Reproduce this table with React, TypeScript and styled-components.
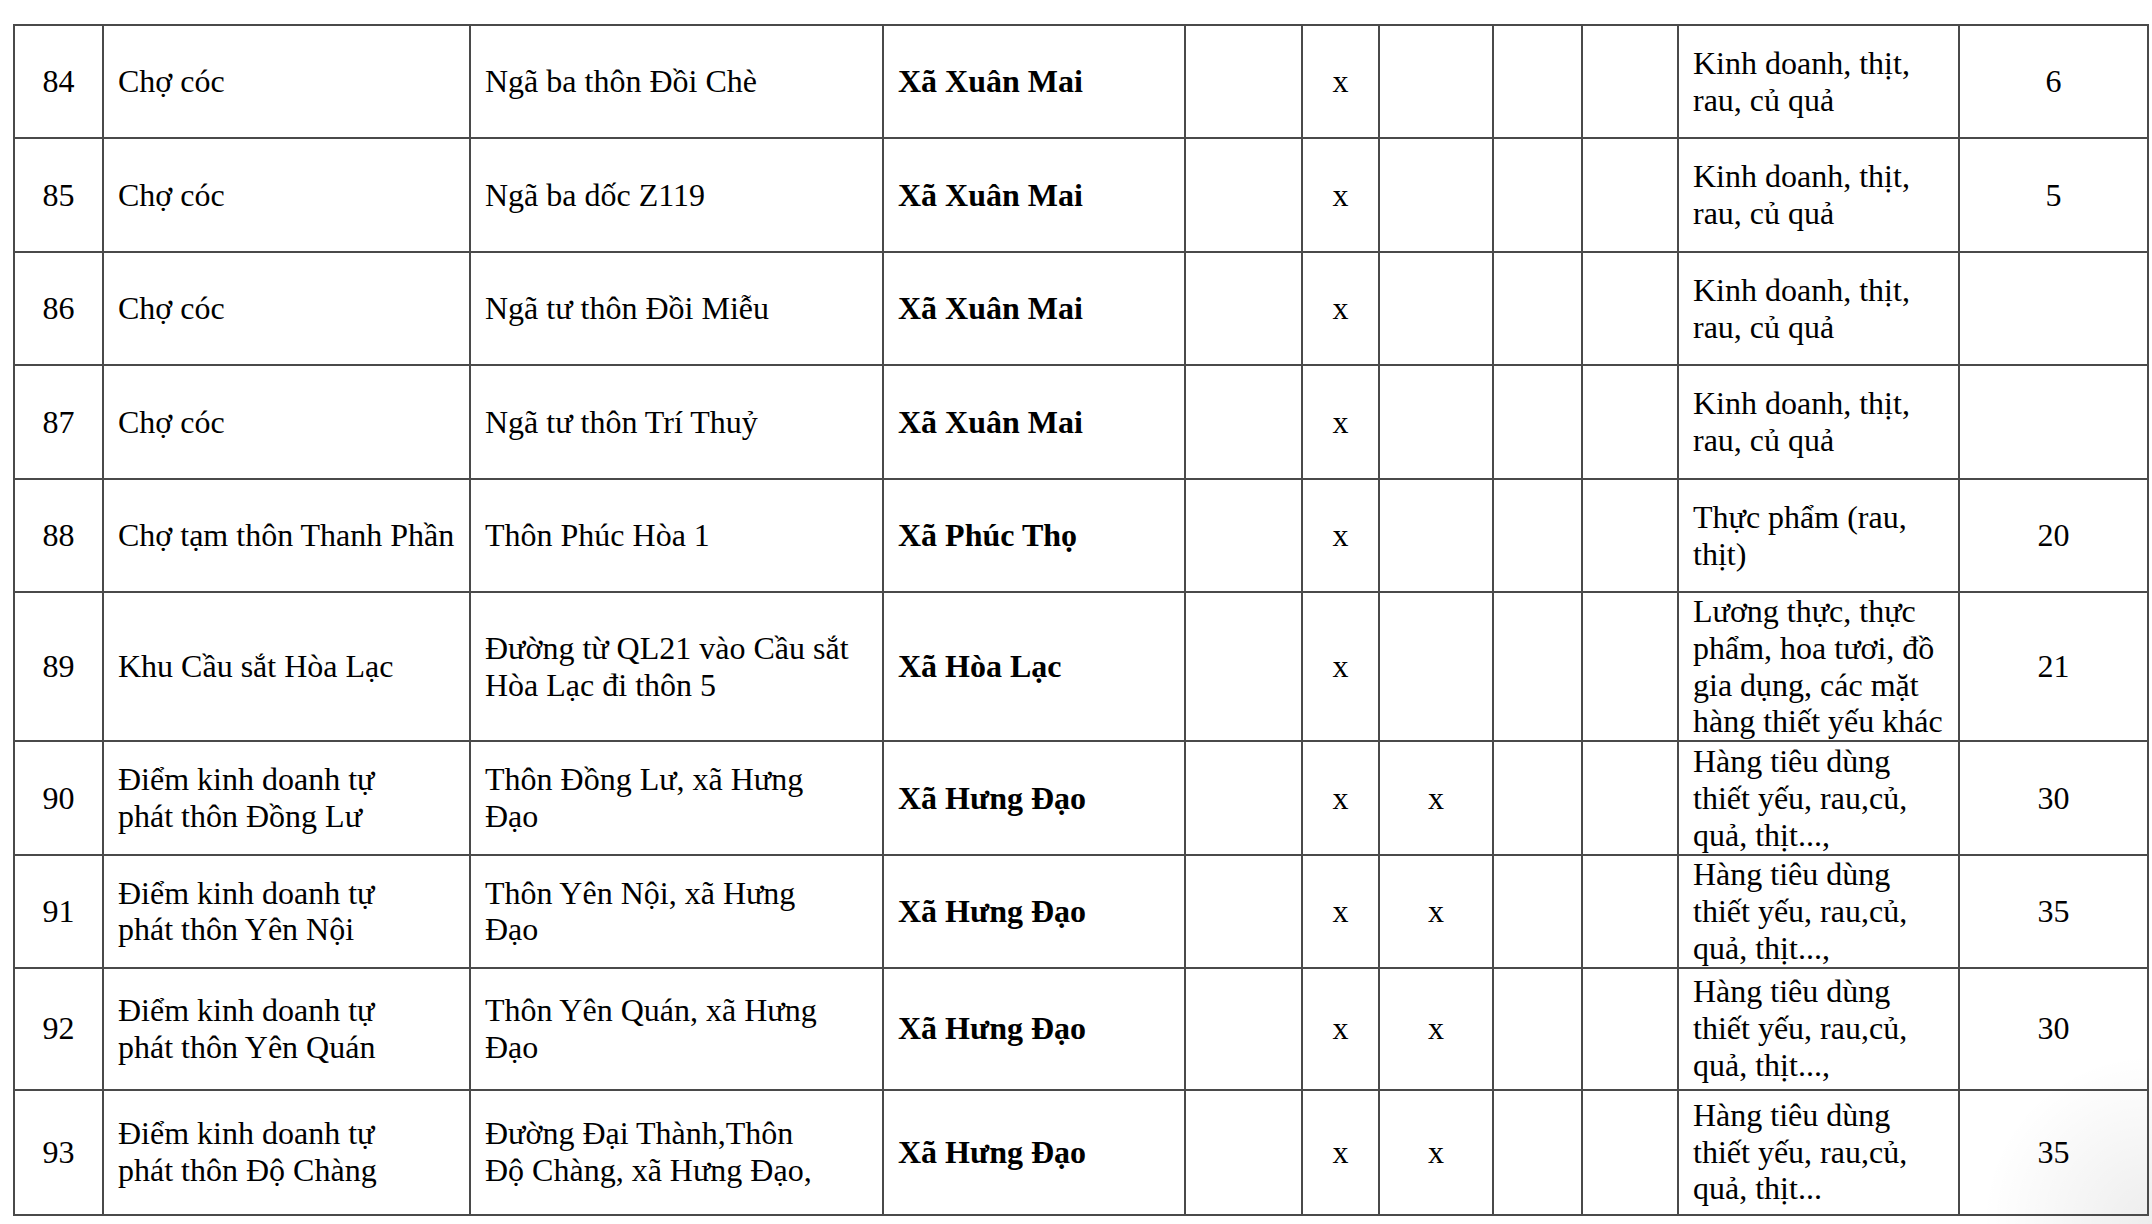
import React from 'react';
import styled, { createGlobalStyle } from 'styled-components';

const GlobalStyle = createGlobalStyle`
  html, body {
    margin: 0;
    padding: 0;
    background: #ffffff;
  }
  body {
    width: 2152px;
    height: 1224px;
    overflow: hidden;
    font-family: 'Liberation Serif', 'Times New Roman', serif;
    color: #000;
    background: radial-gradient(circle at 100% 100%, rgba(0, 0, 0, 0.07), rgba(0, 0, 0, 0) 170px), #ffffff;
  }
`;

const Page = styled.div`
  padding: 24px 0 0 13px;
`;

const Table = styled.table`
  border-collapse: collapse;
  table-layout: fixed;
  width: 2134px;
  font-size: 32px;
  line-height: 1.15;
`;

const Row = styled.tr<{ $h: number }>`
  height: ${(p) => p.$h}px;
`;

const Cell = styled.td<{ $center?: boolean; $bold?: boolean }>`
  border: 2px solid #4a4a4a;
  padding: 0 6px 0 14px;
  vertical-align: middle;
  white-space: nowrap;
  text-align: ${(p) => (p.$center ? 'center' : 'left')};
  padding-left: ${(p) => (p.$center ? '6px' : '14px')};
  font-weight: ${(p) => (p.$bold ? 700 : 400)};
`;

const Lines = ({ text }: { text: string }) => (
  <>
    {text.split('\n').map((line, i) => (
      <React.Fragment key={i}>
        {i > 0 && <br />}
        {line}
      </React.Fragment>
    ))}
  </>
);

const widths = [89, 367, 413, 302, 117, 77, 114, 89, 96, 281, 189];

type Item = {
  no: string;
  name: string;
  place: string;
  commune: string;
  a: boolean;
  b: boolean;
  goods: string;
  count: string;
  h: number;
};

const rows: Item[] = [
  { no: '84', name: 'Chợ cóc', place: 'Ngã ba thôn Đồi Chè', commune: 'Xã Xuân Mai', a: true, b: false, goods: 'Kinh doanh, thịt,\nrau, củ quả', count: '6', h: 113 },
  { no: '85', name: 'Chợ cóc', place: 'Ngã ba dốc Z119', commune: 'Xã Xuân Mai', a: true, b: false, goods: 'Kinh doanh, thịt,\nrau, củ quả', count: '5', h: 114 },
  { no: '86', name: 'Chợ cóc', place: 'Ngã tư thôn Đồi Miễu', commune: 'Xã Xuân Mai', a: true, b: false, goods: 'Kinh doanh, thịt,\nrau, củ quả', count: '', h: 113 },
  { no: '87', name: 'Chợ cóc', place: 'Ngã tư thôn Trí Thuỷ', commune: 'Xã Xuân Mai', a: true, b: false, goods: 'Kinh doanh, thịt,\nrau, củ quả', count: '', h: 114 },
  { no: '88', name: 'Chợ tạm thôn Thanh Phần', place: 'Thôn Phúc Hòa 1', commune: 'Xã Phúc Thọ', a: true, b: false, goods: 'Thực phẩm (rau,\nthịt)', count: '20', h: 113 },
  { no: '89', name: 'Khu Cầu sắt Hòa Lạc', place: 'Đường từ QL21 vào Cầu sắt\nHòa Lạc đi thôn 5', commune: 'Xã Hòa Lạc', a: true, b: false, goods: 'Lương thực, thực\nphẩm, hoa tươi, đồ\ngia dụng, các mặt\nhàng thiết yếu khác', count: '21', h: 148 },
  { no: '90', name: 'Điểm kinh doanh tự\nphát thôn Đồng Lư', place: 'Thôn Đồng Lư, xã Hưng\nĐạo', commune: 'Xã Hưng Đạo', a: true, b: true, goods: 'Hàng tiêu dùng\nthiết yếu, rau,củ,\nquả, thịt...,', count: '30', h: 114 },
  { no: '91', name: 'Điểm kinh doanh tự\nphát thôn Yên Nội', place: 'Thôn Yên Nội, xã Hưng\nĐạo', commune: 'Xã Hưng Đạo', a: true, b: true, goods: 'Hàng tiêu dùng\nthiết yếu, rau,củ,\nquả, thịt...,', count: '35', h: 112 },
  { no: '92', name: 'Điểm kinh doanh tự\nphát thôn Yên Quán', place: 'Thôn Yên Quán, xã Hưng\nĐạo', commune: 'Xã Hưng Đạo', a: true, b: true, goods: 'Hàng tiêu dùng\nthiết yếu, rau,củ,\nquả, thịt...,', count: '30', h: 122 },
  { no: '93', name: 'Điểm kinh doanh tự\nphát thôn Độ Chàng', place: 'Đường Đại Thành,Thôn\nĐộ Chàng, xã Hưng Đạo,', commune: 'Xã Hưng Đạo', a: true, b: true, goods: 'Hàng tiêu dùng\nthiết yếu, rau,củ,\nquả, thịt...', count: '35', h: 125 },
];

const App = () => {
  return (
    <>
      <GlobalStyle />
      <Page>
        <Table>
          <colgroup>
            {widths.map((w, i) => (
              <col key={i} style={{ width: w }} />
            ))}
          </colgroup>
          <tbody>
            {rows.map((r) => (
              <Row key={r.no} $h={r.h}>
                <Cell $center>{r.no}</Cell>
                <Cell><Lines text={r.name} /></Cell>
                <Cell><Lines text={r.place} /></Cell>
                <Cell $bold>{r.commune}</Cell>
                <Cell />
                <Cell $center>{r.a ? 'x' : ''}</Cell>
                <Cell $center>{r.b ? 'x' : ''}</Cell>
                <Cell />
                <Cell />
                <Cell><Lines text={r.goods} /></Cell>
                <Cell $center>{r.count}</Cell>
              </Row>
            ))}
          </tbody>
        </Table>
      </Page>
    </>
  );
};

export default App;
